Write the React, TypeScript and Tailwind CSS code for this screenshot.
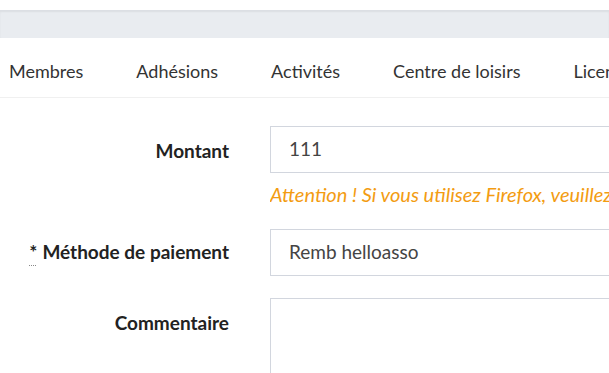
import React from 'react'

const navItems = ['Membres', 'Adhésions', 'Activités', 'Centre de loisirs', 'Licences']

export default function App() {
  return (
    <div className="w-[609px] h-[373px] overflow-hidden bg-white text-[#333] font-['Lato','Liberation_Sans',sans-serif]">
      {/* top bar */}
      <div className="h-[10px] bg-white" />
      <div className="h-[28px] bg-[#e9ecf0] border-t border-[#dcdfe4] shadow-[inset_0_1px_2px_rgba(0,0,0,0.06)]" />

      {/* tabs */}
      <nav className="h-[60px] border-b border-[#f0f0f0] flex items-center pt-[8px] pl-[9px] gap-[53px] whitespace-nowrap overflow-hidden text-[18px]">
        {navItems.map((label) => (
          <span key={label} className="shrink-0">{label}</span>
        ))}
      </nav>

      {/* form */}
      <div className="pt-[28px] grid grid-cols-[229px_1fr] gap-x-[41px] text-[19px]">
        <div className="h-[47px] flex items-center justify-end font-bold text-[#222] pt-[3px]">Montant</div>
        <div className="min-w-0 overflow-hidden">
          <div className="h-[47px] border border-[#d2d6de] border-r-0 flex items-center pl-[18px] text-[#444]">111</div>
          <p className="mt-[6px] italic text-[20px] text-[#f39c12] whitespace-nowrap">
            Attention ! Si vous utilisez Firefox, veuillez utiliser le point
          </p>
        </div>

        <div className="mt-[20px] h-[47px] flex items-center justify-end font-bold text-[#222]">
          <span className="underline decoration-dotted decoration-1 underline-offset-[6px] decoration-[#888] mr-[5px]">*</span>
          Méthode de paiement
        </div>
        <div className="mt-[20px] h-[47px] border border-[#d2d6de] border-r-0 flex items-center pl-[18px] text-[#444]">
          Remb helloasso
        </div>

        <div className="mt-[22px] flex justify-end font-bold text-[#222] pt-[11px]">Commentaire</div>
        <div className="mt-[22px] h-[80px] border border-[#d2d6de] border-r-0" />
      </div>
    </div>
  )
}
